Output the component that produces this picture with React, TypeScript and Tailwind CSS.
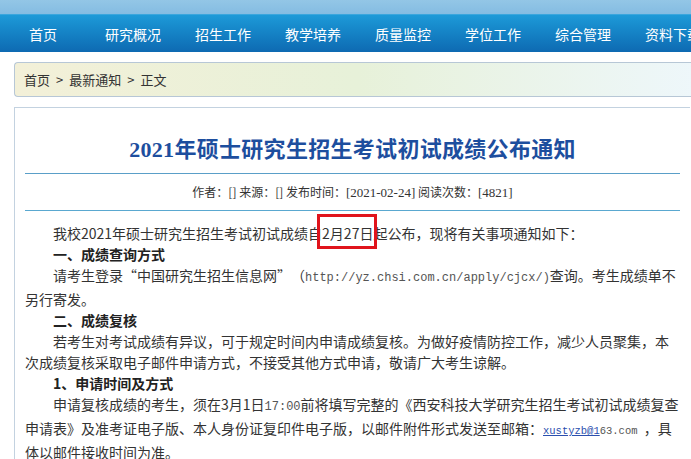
import * as React from "react";

// Top navigation entries
const NAV_ITEMS = [
  "首页",
  "研究概况",
  "招生工作",
  "教学培养",
  "质量监控",
  "学位工作",
  "综合管理",
  "资料下载",
];

const CJK = "font-['Noto_Sans_CJK_SC','Noto_Sans',sans-serif]";

function TopNav() {
  return (
    <div>
      <div className="h-[14px] bg-gradient-to-b from-[#93c6e6] to-[#84bce2]" />
      <nav className="h-[38px] border-t border-[#3aa6dd] bg-gradient-to-b from-[#1d9ad8] to-[#0e6ab2]">
        <ul className="-ml-[2px] flex h-full items-center">
          {NAV_ITEMS.map((item) => (
            <li
              key={item}
              className="w-[90px] shrink-0 text-center text-[14px] leading-[20px] text-white"
            >
              {item}
            </li>
          ))}
        </ul>
      </nav>
    </div>
  );
}

function Breadcrumb() {
  const sep = <span className="mx-[6px]">&gt;</span>;
  return (
    <div className="ml-[14px] mt-[10px] flex h-[35px] items-center rounded-l-[4px] border border-r-0 border-[#b7c7d6] bg-gradient-to-r from-[#f3f0d8] via-[#e7f1d9] to-[#eef7fb] pl-[9px] text-[13px] text-[#333]">
      首页{sep}最新通知{sep}正文
    </div>
  );
}

function Article() {
  // full-width cell for curly quotes, as the source font draws them
  const quote = "inline-block w-[14px] indent-0";
  return (
    <div className="ml-[14px] mt-[10px] w-[676px] border-l border-t border-[#c3d2e0] bg-white px-[10px]">
      {/* Title */}
      <h1 className="border-b border-[#5a9fc8] pb-[8px] pt-[27px] text-center font-['Liberation_Serif','Noto_Sans_CJK_SC',serif] text-[22px] font-bold leading-[30px] tracking-[0.3px] text-[#1d4e9e]">
        2021年硕士研究生招生考试初试成绩公布通知
      </h1>

      {/* Meta */}
      <div className="border-b border-[#5aa8d0] text-center text-[12px] leading-[35px] text-[#333]">
        作者：[] 来源：[] 发布时间：
        <span className="font-['Liberation_Serif',serif] text-[13px]">[2021-02-24]</span>{" "}
        阅读次数：
        <span className="font-['Liberation_Serif',serif] text-[13px]">[4821]</span>
      </div>

      {/* Body */}
      <div className="pt-[12px] text-[14px] leading-[21px] text-[#333]">
        <p className="indent-[28px]">
          我校2021年硕士研究生招生考试初试成绩自
          <span className="relative inline-block indent-0">
            2月27日
            <span className="absolute -bottom-[5px] -left-[5px] -right-[4px] -top-[9px] border-[3px] border-[#e0141c]" />
          </span>
          起公布，现将有关事项通知如下：
        </p>
        <p className="indent-[28px] font-bold text-[#222]">一、成绩查询方式</p>
        <p className="indent-[28px]">
          请考生登录<span className={`${quote} text-right`}>“</span>中国研究生招生信息网
          <span className={`${quote} text-left`}>”</span>（
          <span className="font-['Liberation_Mono',monospace] text-[12px] text-[#555]">
            http://yz.chsi.com.cn/apply/cjcx/)
          </span>
          查询。考生成绩单不另行寄发。
        </p>
        <p className="indent-[28px] font-bold text-[#222]">二、成绩复核</p>
        <p className="indent-[28px]">
          若考生对考试成绩有异议，可于规定时间内申请成绩复核。为做好疫情防控工作，减少人员聚集，本次成绩复核采取电子邮件申请方式，不接受其他方式申请，敬请广大考生谅解。
        </p>
        <p className="indent-[28px] font-bold text-[#222]">1、申请时间及方式</p>
        <p className="indent-[28px]">
          申请复核成绩的考生，须在3月1日
          <span className="font-['Liberation_Mono',monospace] text-[12px] text-[#555]">17:00</span>
          前将填写完整的《西安科技大学研究生招生考试初试成绩复查申请表》及准考证电子版、本人身份证复印件电子版，以邮件附件形式发送至邮箱：
          <span className="font-['Liberation_Mono',monospace] text-[10.5px] text-[#555]">
            <span className="text-[#2b4fae] underline">xustyzb@1</span>63.com{" "}
          </span>
          ，具体以邮件接收时间为准。
        </p>
        <p className="indent-[28px] font-bold text-[#222]">2、邮件申请要求</p>
      </div>
    </div>
  );
}

export default function App() {
  return (
    <div lang="zh-CN" className={`h-[459px] w-[691px] overflow-hidden bg-white ${CJK}`}>
      <div className="w-[700px]">
        <TopNav />
        <Breadcrumb />
        <Article />
      </div>
    </div>
  );
}
